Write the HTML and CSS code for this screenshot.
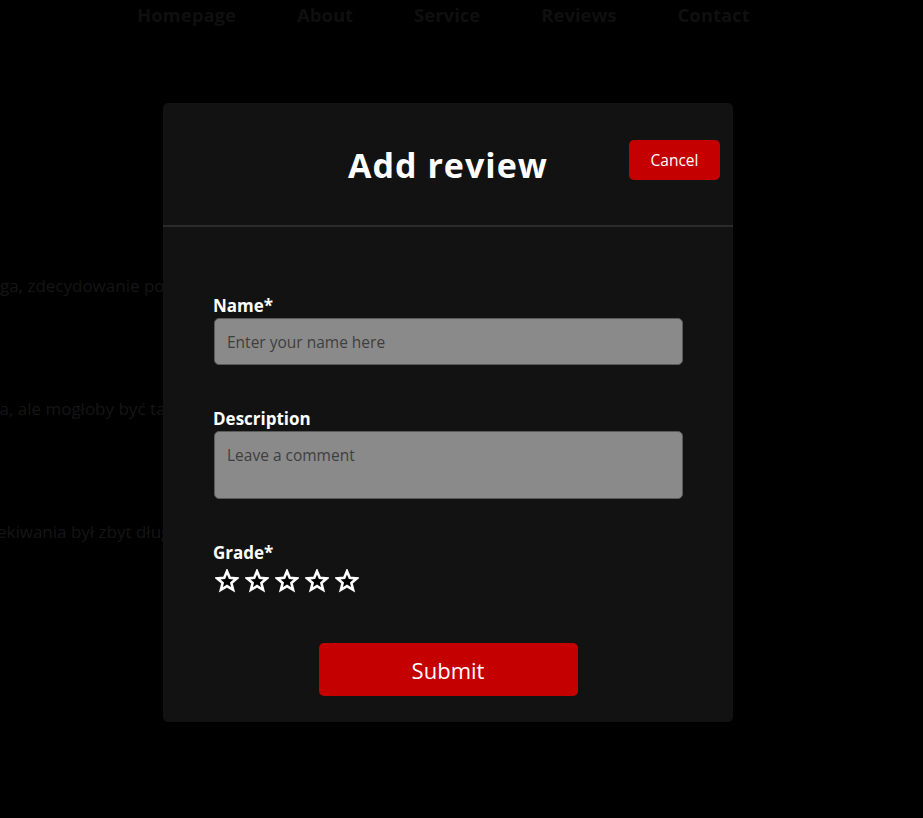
FILE: index.html
```html
<!DOCTYPE html>
<html lang="pl">
<head>
<meta charset="utf-8">
<title>Reviews</title>
<link rel="stylesheet" href="styles.css">
</head>
<body>
<nav class="nav">
  <a href="#">Homepage</a>
  <a href="#">About</a>
  <a href="#">Service</a>
  <a href="#">Reviews</a>
  <a href="#">Contact</a>
</nav>
<main class="reviews">
  <p class="review r1">Świetna usługa, zdecydowanie polecam wszystkim</p>
  <p class="review r2">Dobra obsługa, ale mogłoby być taniej</p>
  <p class="review r3">Czas oczekiwania był zbyt długi</p>
</main>

<div class="modal">
  <header class="modal-header">
    <h1 class="modal-title">Add review</h1>
    <button class="btn-cancel" type="button">Cancel</button>
  </header>
  <form class="modal-form">
    <label class="field-label" for="name">Name*</label>
    <input class="field-input" id="name" type="text" placeholder="Enter your name here">
    <label class="field-label gap" for="desc">Description</label>
    <textarea class="field-area" id="desc" placeholder="Leave a comment"></textarea>
    <span class="field-label gap">Grade*</span>
    <div class="stars">
      <svg class="star" viewBox="0 0 24 24"><path d="M12 2.2l2.75 6.6 7.05.55-5.4 4.6 1.7 6.9L12 17.1l-6.1 3.75 1.7-6.9-5.4-4.6 7.05-.55z"/></svg>
      <svg class="star" viewBox="0 0 24 24"><path d="M12 2.2l2.75 6.6 7.05.55-5.4 4.6 1.7 6.9L12 17.1l-6.1 3.75 1.7-6.9-5.4-4.6 7.05-.55z"/></svg>
      <svg class="star" viewBox="0 0 24 24"><path d="M12 2.2l2.75 6.6 7.05.55-5.4 4.6 1.7 6.9L12 17.1l-6.1 3.75 1.7-6.9-5.4-4.6 7.05-.55z"/></svg>
      <svg class="star" viewBox="0 0 24 24"><path d="M12 2.2l2.75 6.6 7.05.55-5.4 4.6 1.7 6.9L12 17.1l-6.1 3.75 1.7-6.9-5.4-4.6 7.05-.55z"/></svg>
      <svg class="star" viewBox="0 0 24 24"><path d="M12 2.2l2.75 6.6 7.05.55-5.4 4.6 1.7 6.9L12 17.1l-6.1 3.75 1.7-6.9-5.4-4.6 7.05-.55z"/></svg>
    </div>
    <div class="actions">
      <button class="btn-submit" type="submit">Submit</button>
    </div>
  </form>
</div>
</body>
</html>
```

FILE: styles.css
```css
* { box-sizing: border-box; }

html, body {
  margin: 0;
  height: 100%;
  background: #000;
  overflow: hidden;
}

body {
  font-family: "Open Sans", "Noto Sans", sans-serif;
  color: #fff;
}

.nav {
  display: flex;
  gap: 61px;
  padding-left: 137px;
  height: 30px;
  align-items: center;
}

.nav a {
  color: #0f0f0f;
  text-decoration: none;
  font-weight: 700;
  font-size: 18.5px;
  line-height: 28px;
}

.reviews {
  padding-top: 246px;
}

.review {
  margin: 0 0 103px;
  white-space: nowrap;
  color: #151515;
  font-size: 17px;
  line-height: 20px;
}

.r1 { margin-left: -100px; }
.r2 { margin-left: -107px; }
.r3 { margin-left: -70px; }

.modal {
  position: absolute;
  left: 163px;
  top: 103px;
  width: 570px;
  height: 619px;
  background: #121212;
  border-radius: 5px;
}

.modal-header {
  position: relative;
  height: 124px;
  border-bottom: 2px solid #2b2b2b;
  display: flex;
  align-items: flex-start;
  justify-content: center;
}

.modal-title {
  margin: 38px 0 0;
  font-size: 34px;
  line-height: 48px;
  font-weight: 700;
  letter-spacing: 1px;
  color: #fff;
}

.btn-cancel {
  position: absolute;
  right: 13px;
  top: 37px;
  width: 91px;
  height: 40px;
  border: none;
  border-radius: 5px;
  background: #c40000;
  color: #fff;
  font-family: inherit;
  font-size: 15.5px;
  cursor: pointer;
}

.modal-form {
  display: flex;
  flex-direction: column;
  align-items: stretch;
  padding: 69px 50px 25px 50px;
}

.field-label {
  display: block;
  font-size: 17px;
  line-height: 20px;
  font-weight: 700;
  color: #fff;
  margin-bottom: 2px;
}

.field-label.gap { margin-top: 44px; }

.field-input,
.field-area {
  display: block;
  width: 469px;
  margin-left: 1px;
  background: #8a8a8a;
  border: 1px solid #5a5a5a;
  border-radius: 5px;
  color: #222;
  font-family: inherit;
  font-size: 15.5px;
  padding: 0 12px;
}

.field-input { height: 47px; }

.field-area {
  height: 68px;
  padding-top: 12px;
  resize: none;
}

.field-input::placeholder,
.field-area::placeholder { color: #3e3e3e; }

.stars {
  display: flex;
  gap: 6px;
  margin-top: 4px;
  padding-left: 2px;
}

.star {
  width: 24px;
  height: 24px;
}

.star path {
  fill: #000;
  stroke: #fff;
  stroke-width: 2.6;
  stroke-linejoin: miter;
}

.actions {
  display: flex;
  justify-content: center;
  margin-top: 50px;
}

.btn-submit {
  width: 259px;
  height: 53px;
  border: none;
  border-radius: 5px;
  background: #c40000;
  color: #fff;
  font-family: inherit;
  font-size: 22px;
  cursor: pointer;
}
```
